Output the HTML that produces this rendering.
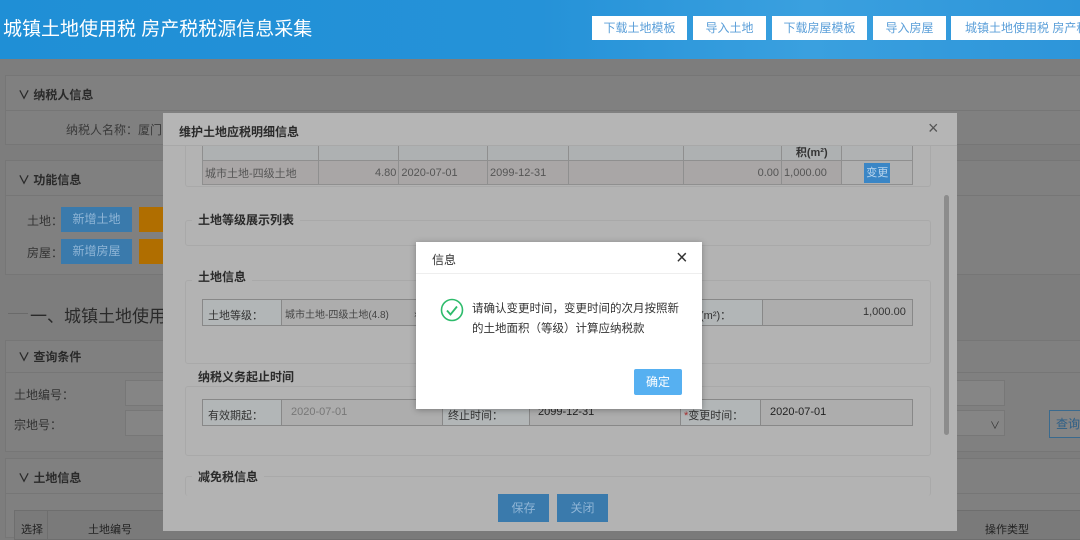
<!DOCTYPE html>
<html><head><meta charset="utf-8"><style>
*{box-sizing:border-box;margin:0;padding:0}
body{width:1080px;height:531px;overflow:hidden;background:#7d7d7d;font-family:"Liberation Sans","Noto Sans CJK SC",sans-serif;position:relative;font-size:12px;color:#333}
.a{position:absolute}
.hdr{left:0;top:0;width:1080px;height:59px;background:linear-gradient(90deg,#1f8fd6 0%,#2592d8 50%,#3aa0df 75%,#2d95d9 100%)}
.hb{top:16px;height:24px;background:#fff;color:#5b9fd9;font-size:12px;line-height:24px;text-align:center;white-space:nowrap;overflow:hidden}
.pn{background:#808080;border:1px solid #767676}
.t{color:#2a2a2a;font-weight:bold;font-size:12px}
.g{color:#333}
.btn{background:#3a7aac;color:#8fb5d6;text-align:center;line-height:25px;font-size:12px}
.ob{background:#b06e00}
.inp{background:#858585;border:1px solid #777}
.modal{left:163px;top:113px;width:794px;height:418px;background:#b3b3b3;overflow:hidden}
.fs{border:1px solid #a9a9a9;border-radius:3px}
.lg{background:#b3b3b3;font-weight:bold;color:#2a2a2a;font-size:12px;padding:0 6px}
td{border:1px solid #8f8f8f;font-size:11px;color:#555;height:24px;padding:0 2px}
</style></head><body>
<div class="a hdr"></div>
<div class="a" style="left:3px;top:14px;color:#fff;font-size:19px;">城镇土地使用税 房产税税源信息采集</div>
<div class="a hb" style="left:592px;width:95px">下载土地模板</div>
<div class="a hb" style="left:693px;width:73px">导入土地</div>
<div class="a hb" style="left:772px;width:95px">下载房屋模板</div>
<div class="a hb" style="left:873px;width:73px">导入房屋</div>
<div class="a hb" style="left:951px;width:135px;text-align:left;padding-left:14px">城镇土地使用税 房产税</div>

<div class="a pn" style="left:5px;top:75px;width:1080px;height:70px"></div>
<div class="a" style="left:5px;top:110px;width:1080px;height:1px;background:#767676"></div>
<div class="a t" style="left:18px;top:86px">∨ 纳税人信息</div>
<div class="a g" style="left:66px;top:121px;color:#3a3a3a">纳税人名称：厦门</div>

<div class="a pn" style="left:5px;top:160px;width:1080px;height:115px"></div>
<div class="a" style="left:5px;top:195px;width:1080px;height:1px;background:#767676"></div>
<div class="a t" style="left:18px;top:171px">∨ 功能信息</div>
<div class="a g" style="left:27px;top:212px">土地：</div>
<div class="a btn" style="left:61px;top:207px;width:71px">新增土地</div>
<div class="a ob" style="left:139px;top:207px;width:24px;height:25px"></div>
<div class="a g" style="left:27px;top:244px">房屋：</div>
<div class="a btn" style="left:61px;top:239px;width:71px">新增房屋</div>
<div class="a ob" style="left:139px;top:239px;width:24px;height:25px"></div>

<div class="a" style="left:8px;top:313px;width:20px;height:1px;background:#6a6a6a"></div>
<div class="a" style="left:30px;top:302px;font-size:17px;color:#2a2a2a">一、城镇土地使用税</div>

<div class="a pn" style="left:5px;top:340px;width:1080px;height:112px"></div>
<div class="a" style="left:5px;top:372px;width:1080px;height:1px;background:#767676"></div>
<div class="a t" style="left:18px;top:348px">∨ 查询条件</div>
<div class="a g" style="left:14px;top:386px">土地编号：</div>
<div class="a inp" style="left:125px;top:380px;width:880px;height:26px"></div>
<div class="a g" style="left:14px;top:416px">宗地号：</div>
<div class="a inp" style="left:125px;top:410px;width:880px;height:26px"></div>
<div class="a" style="left:990px;top:417px;color:#333;font-size:10px">∨</div>
<div class="a" style="left:1049px;top:410px;width:40px;height:28px;border:1px solid #3a6a8e;background:#858585;color:#2d5f87;line-height:26px;padding-left:6px">查询</div>

<div class="a pn" style="left:5px;top:458px;width:1080px;height:80px"></div>
<div class="a" style="left:5px;top:493px;width:1080px;height:1px;background:#767676"></div>
<div class="a t" style="left:18px;top:469px">∨ 土地信息</div>
<div class="a" style="left:14px;top:510px;width:1070px;height:30px;border:1px solid #6e6e6e;background:#7a7a7a"></div>
<div class="a" style="left:47px;top:510px;width:1px;height:30px;background:#6e6e6e"></div>
<div class="a" style="left:21px;top:521px;color:#222;font-size:11px">选择</div>
<div class="a" style="left:88px;top:521px;color:#222;font-size:11px">土地编号</div>
<div class="a" style="left:985px;top:521px;color:#222;font-size:11px">操作类型</div>

<div class="a modal">
 <div class="a fs" style="left:22px;top:20px;width:746px;height:54px;border-top:none"></div>
 <table class="a" style="left:39px;top:23px;width:711px;border-collapse:collapse;background:#aaa8a8">
  <tr style="height:22px;background:#aeb1b2"><td style="width:115px;height:22px"></td><td style="width:80px"></td><td style="width:88px"></td><td style="width:80px"></td><td style="width:115px"></td><td style="width:97px"></td><td style="width:60px;text-align:center;vertical-align:bottom;font-weight:bold;color:#333">积(m²)</td><td style="width:70px;background:#b0b2b3"></td></tr>
  <tr style="background:#a9a6a6"><td>城市土地-四级土地</td><td style="text-align:right">4.80</td><td>2020-07-01</td><td>2099-12-31</td><td></td><td style="text-align:right">0.00</td><td>1,000.00</td><td style="text-align:center;background:#b0b0b0"><span style="display:inline-block;background:#3a86c6;color:#b8d4ec;width:26px;height:20px;line-height:20px">变更</span></td></tr>
 </table>
 <div class="a" style="left:0;top:0;width:794px;height:33px;background:#b5b5b5;border-bottom:1px solid #a8a8a8"></div>
 <div class="a t" style="left:16px;top:10px">维护土地应税明细信息</div>
 <div class="a" style="left:765px;top:5px;font-size:18px;color:#555">×</div>
 <div class="a fs" style="left:22px;top:107px;width:746px;height:26px"></div>
 <div class="a lg" style="left:29px;top:98px">土地等级展示列表</div>
 <div class="a fs" style="left:22px;top:167px;width:746px;height:84px"></div>
 <div class="a lg" style="left:29px;top:155px">土地信息</div>
 <div class="a" style="left:39px;top:186px;width:711px;height:27px;border:1px solid #888;background:#adadad"></div>
 <div class="a" style="left:39px;top:186px;width:80px;height:27px;border:1px solid #888;background:#b2b6b7;padding:7px 5px;font-size:11px">土地等级：</div>
 <div class="a" style="left:122px;top:193px;font-size:10px;color:#444">城市土地-四级土地(4.8)&nbsp;&nbsp;&nbsp;&nbsp;&nbsp;&nbsp;&nbsp;&nbsp;&nbsp;×</div>
 <div class="a" style="left:520px;top:186px;width:80px;height:27px;border:1px solid #888;background:#b2b6b7;padding:7px 5px;font-size:11px">积(m²)：</div>
 <div class="a" style="left:700px;top:193px;font-size:11px;color:#333">1,000.00</div>
 <div class="a fs" style="left:22px;top:273px;width:746px;height:70px"></div>
 <div class="a lg" style="left:29px;top:255px">纳税义务起止时间</div>
 <div class="a" style="left:39px;top:286px;width:711px;height:27px;border:1px solid #888;background:#adadad"></div>
 <div class="a" style="left:39px;top:286px;width:80px;height:27px;border:1px solid #888;background:#b2b6b7;padding:7px 5px;font-size:11px">有效期起：</div>
 <div class="a" style="left:128px;top:293px;font-size:11px;color:#777">2020-07-01</div>
 <div class="a" style="left:279px;top:286px;width:88px;height:27px;border:1px solid #888;background:#b2b6b7;padding:7px 5px;font-size:11px">终止时间：</div>
 <div class="a" style="left:375px;top:293px;font-size:11px;color:#222">2099-12-31</div>
 <div class="a" style="left:517px;top:286px;width:81px;height:27px;border:1px solid #888;background:#b2b6b7;padding:7px 3px;font-size:11px"><span style="color:#a33">*</span>变更时间：</div>
 <div class="a" style="left:607px;top:293px;font-size:11px;color:#222">2020-07-01</div>
 <div class="a fs" style="left:22px;top:363px;width:746px;height:20px;border-bottom:none"></div>
 <div class="a lg" style="left:29px;top:355px">减免税信息</div>
 <div class="a btn" style="left:335px;top:381px;width:51px;height:28px;line-height:28px">保存</div>
 <div class="a btn" style="left:394px;top:381px;width:51px;height:28px;line-height:28px">关闭</div>
 <div class="a" style="left:781px;top:82px;width:5px;height:240px;background:#8c8c8c;border-radius:3px"></div>
</div>

<div class="a" style="left:416px;top:242px;width:286px;height:167px;background:#fff;box-shadow:0 1px 6px rgba(0,0,0,.3)">
 <div class="a" style="left:16px;top:9px;font-size:12px;color:#333">信息</div>
 <div class="a" style="left:260px;top:5px;font-size:20px;color:#333">×</div>
 <div class="a" style="left:0;top:31px;width:286px;height:1px;background:#eee"></div>
 <svg class="a" style="left:24px;top:56px" width="24" height="24" viewBox="0 0 24 24"><circle cx="12" cy="12" r="10.5" fill="none" stroke="#2dbb6b" stroke-width="1.6"/><path d="M7 12.5l3.5 4 6.5-8" fill="none" stroke="#2dbb6b" stroke-width="1.8"/></svg>
 <div class="a" style="left:56px;top:57px;width:210px;font-size:11.5px;line-height:20px;color:#333">请确认变更时间，变更时间的次月按照新<br>的土地面积（等级）计算应纳税款</div>
 <div class="a" style="left:218px;top:127px;width:48px;height:26px;background:#56b0f1;color:#fff;text-align:center;line-height:26px;font-size:12px;border-radius:2px">确定</div>
</div>
</body></html>
